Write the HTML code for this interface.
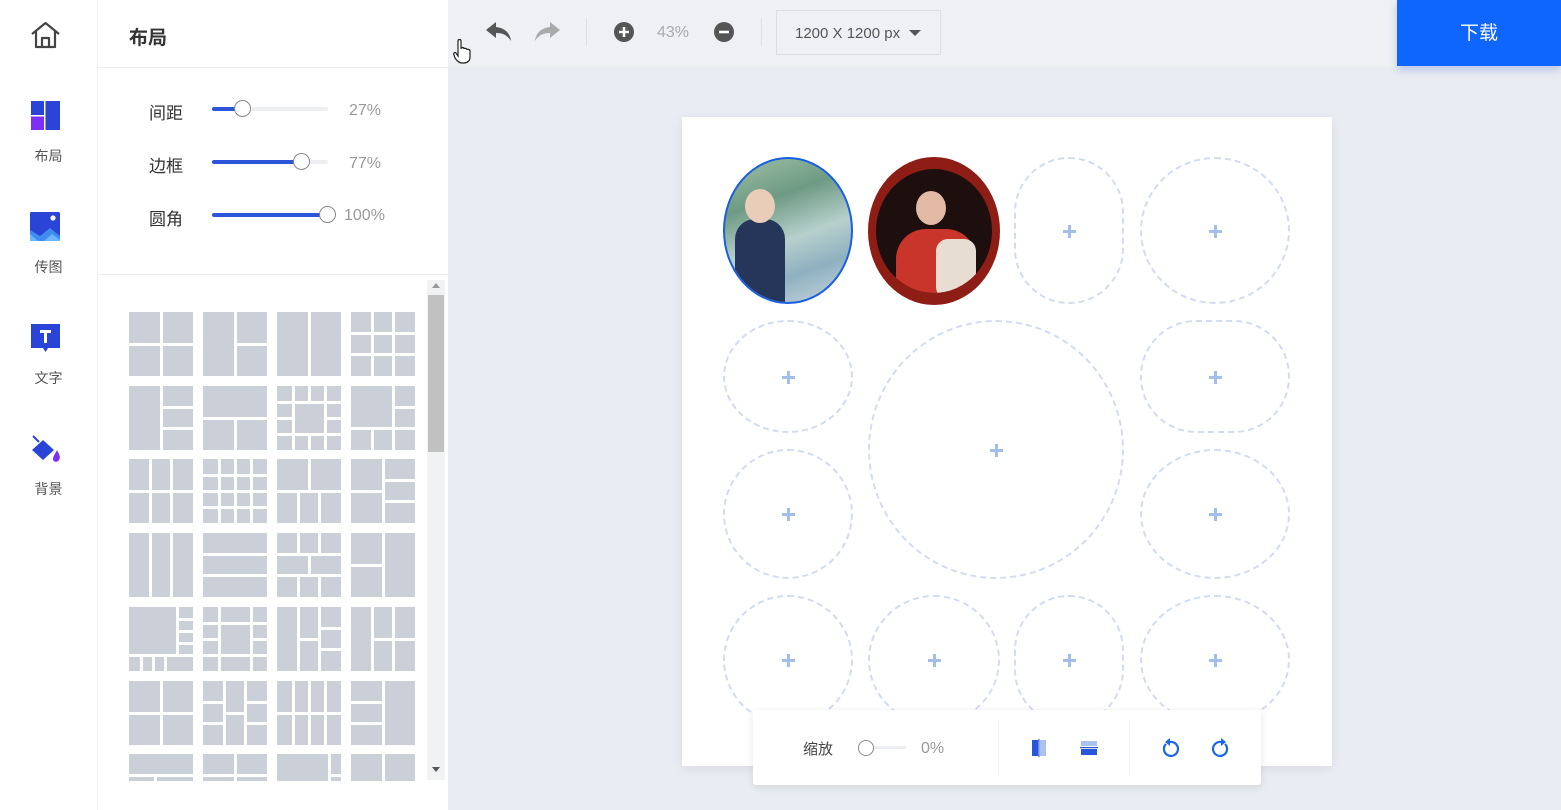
<!DOCTYPE html>
<html><head><meta charset="utf-8">
<style>
*{margin:0;padding:0;box-sizing:border-box}
body{width:1561px;height:810px;overflow:hidden;background:#e9ecf2;font-family:"Liberation Sans","Noto Sans CJK SC",sans-serif;position:relative}
.abs{position:absolute}
#side{left:0;top:0;width:98px;height:810px;background:#fff;border-right:1px solid #eceef2}
.nav{position:absolute;left:0;width:97px;text-align:center;font-size:14px;color:#555}
#panel{left:98px;top:0;width:350px;height:810px;background:#fff}
#phead{left:0;top:0;width:350px;height:68px;border-bottom:1px solid #eceef2}
#phead span{position:absolute;left:31px;top:23px;font-size:19px;font-weight:bold;color:#333}
.lbl{position:absolute;left:51px;font-size:17px;color:#333}
.trk{position:absolute;left:114px;width:116px;height:4px;background:#eceef2;border-radius:2px}
.fill{position:absolute;left:0;top:0;height:4px;background:#2c55d9;border-radius:2px}
.knob{position:absolute;top:-7px;width:17px;height:17px;border:1px solid #888;border-radius:50%;background:#fff}
.val{position:absolute;font-size:16px;color:#999}
#sep{left:0;top:274px;width:350px;height:1px;background:#eceef2}
.th{position:absolute;width:64px;height:64px;background:#cbcfd7;overflow:hidden}
.th i{position:absolute;background:#fff}
#top{left:448px;top:0;width:1113px;height:67px;background:#eef0f4}
#dl{left:1397px;top:0;width:164px;height:66px;background:#0f66ff;color:#fff;font-size:19px;text-align:center;line-height:68px;box-shadow:0 4px 8px rgba(40,80,200,.25)}
#canvas{left:682px;top:117px;width:650px;height:649px;background:#fff;box-shadow:0 2px 10px rgba(0,0,0,.08)}
.s{position:absolute;border:2px dashed #d2dcef}
.s b{position:absolute;left:50%;top:50%;width:13px;height:13px;margin:-6px 0 0 -6px}
.s b:before{content:"";position:absolute;left:5px;top:0;width:3px;height:13px;background:#a3bfe9}
.s b:after{content:"";position:absolute;left:0;top:5px;width:13px;height:3px;background:#a3bfe9}
#bar{left:753px;top:710px;width:508px;height:75px;background:#fff;border-radius:3px;box-shadow:0 2px 8px rgba(0,0,0,.1)}
</style></head><body>
<div id="side" class="abs">
 <svg class="abs" style="left:30px;top:21px" width="31" height="28" viewBox="0 0 31 28"><path d="M2 13 L15.5 2 L29 13 M6 10 V26 H25 V10 M12 26 V17 H19 V26" fill="none" stroke="#444" stroke-width="2.2" stroke-linejoin="round"/></svg>
 <svg class="abs" style="left:31px;top:101px" width="29" height="29" viewBox="0 0 29 29"><rect x="0" y="0" width="13" height="14" fill="#2a44d8"/><rect x="0" y="15.5" width="13" height="13.5" fill="#7b2ff7"/><rect x="14.5" y="0" width="14.5" height="29" fill="#2a44d8"/></svg>
 <div class="nav" style="top:146px">布局</div>
 <svg class="abs" style="left:30px;top:212px" width="30" height="29" viewBox="0 0 30 29"><rect width="30" height="29" rx="1.5" fill="#2a44d8"/><circle cx="23" cy="6" r="2.6" fill="#fff"/><path d="M0 18 L10 24 L20 16 L30 24 V29 H0Z" fill="#3f8cf0"/><path d="M0 22 L8 29 H0Z M14 29 L22 22 L30 28 V29Z" fill="#6cb6ff"/></svg>
 <div class="nav" style="top:257px">传图</div>
 <svg class="abs" style="left:31px;top:324px" width="29" height="29" viewBox="0 0 29 29"><path d="M0 0 H29 V24 H17 L14.5 28 L12 24 H0Z" fill="#2a44d8"/><path d="M9 6 H20 V9 H16 V19 H13 V9 H9Z" fill="#fff"/></svg>
 <div class="nav" style="top:368px">文字</div>
 <svg class="abs" style="left:30px;top:433px" width="32" height="31" viewBox="0 0 32 31"><path d="M3 3 L9 9" stroke="#2a44d8" stroke-width="2"/><path d="M2 17 L13 7 L24 17 L13 27Z" fill="#2a44d8"/><path d="M27 17 C29 21 31 24 29 27 C27 30 23 29 23 26 C23 23 26 20 27 17Z" fill="#7b2ff7"/></svg>
 <div class="nav" style="top:479px">背景</div>
</div>

<div id="panel" class="abs">
 <div id="phead" class="abs"><span>布局</span></div>
 <div class="lbl" style="top:99px">间距</div>
 <div class="trk" style="top:107px"><div class="fill" style="width:31px"></div><div class="knob" style="left:22px"></div></div>
 <div class="val" style="left:251px;top:102px">27%</div>
 <div class="lbl" style="top:152px">边框</div>
 <div class="trk" style="top:160px"><div class="fill" style="width:90px"></div><div class="knob" style="left:81px"></div></div>
 <div class="val" style="left:251px;top:155px">77%</div>
 <div class="lbl" style="top:205px">圆角</div>
 <div class="trk" style="top:213px"><div class="fill" style="width:116px"></div><div class="knob" style="left:107px"></div></div>
 <div class="val" style="left:246px;top:207px">100%</div>
 <div id="sep" class="abs"></div>
 <div id="thumbs" class="abs" style="left:0;top:0;width:330px;height:781px;overflow:hidden"></div>
 <div class="abs" style="left:329px;top:280px;width:18px;height:500px;background:#f1f2f4"></div>
 <div class="abs" style="left:330px;top:295px;width:16px;height:157px;background:#c1c1c1"></div>
 <div class="abs" style="left:334px;top:283px;width:0;height:0;border-left:4px solid transparent;border-right:4px solid transparent;border-bottom:5px solid #999"></div>
 <div class="abs" style="left:334px;top:767px;width:0;height:0;border-left:4px solid transparent;border-right:4px solid transparent;border-top:5px solid #555"></div>
</div>

<div id="top" class="abs">
 <svg class="abs" style="left:38px;top:22px" width="26" height="20" viewBox="0 0 26 20"><path d="M10 0 L0 8 L10 16 V11 C17 11 21 13 25 19 C24 11 19 6 10 5Z" fill="#555"/></svg>
 <svg class="abs" style="left:86px;top:22px" width="26" height="20" viewBox="0 0 26 20"><path d="M16 0 L26 8 L16 16 V11 C9 11 5 13 1 19 C2 11 7 6 16 5Z" fill="#aaa"/></svg>
 <div class="abs" style="left:138px;top:18px;width:1px;height:28px;background:#dcdfe5"></div>
 <svg class="abs" style="left:166px;top:22px" width="20" height="20"><circle cx="10" cy="10" r="10" fill="#555"/><path d="M5 10H15M10 5V15" stroke="#fff" stroke-width="2.6"/></svg>
 <div class="abs" style="left:209px;top:24px;font-size:16px;color:#aaa">43%</div>
 <svg class="abs" style="left:266px;top:22px" width="20" height="20"><circle cx="10" cy="10" r="10" fill="#555"/><path d="M5 10H15" stroke="#fff" stroke-width="2.6"/></svg>
 <div class="abs" style="left:313px;top:18px;width:1px;height:28px;background:#dcdfe5"></div>
 <div class="abs" style="left:328px;top:10px;width:165px;height:45px;border:1px solid #dcdfe5;font-size:15px;color:#555;line-height:45px;padding-left:18px">1200 X 1200 px</div>
 <div class="abs" style="left:461px;top:30px;width:0;height:0;border-left:6px solid transparent;border-right:6px solid transparent;border-top:6px solid #555"></div>
 <svg class="abs" style="left:5px;top:39px" width="18" height="25" viewBox="0 0 18 25"><path d="M5 2 C5 0 8 0 8 2 V10 C8 8 11 8 11 10 C11 9 14 9 14 11 C14 10 17 10 17 12 V18 C17 22 14 24 11 24 H9 C6 24 4 22 2 19 L1 16 C0 14 2 13 3 14 L5 17Z" fill="#fff" stroke="#222" stroke-width="1.2"/></svg>
</div>
<div id="dl" class="abs">下载</div>

<div id="canvas" class="abs">
 <div class="abs" style="left:41px;top:40px;width:130px;height:147px;border-radius:50%;border:2px solid #1a5fe0;overflow:hidden;background:linear-gradient(160deg,#9fc2a8 0%,#6e9a83 30%,#b6d0cc 55%,#8fb0c0 75%,#c6d6dc 100%)">
  <div class="abs" style="left:10px;top:60px;width:50px;height:90px;background:#26355a;border-radius:20px 20px 0 0"></div>
  <div class="abs" style="left:20px;top:30px;width:30px;height:34px;background:#e9cdb8;border-radius:50%"></div>
 </div>
 <div class="abs" style="left:186px;top:40px;width:132px;height:148px;border-radius:50%;background:#8e1d16;overflow:hidden">
  <div class="abs" style="left:8px;top:12px;width:116px;height:124px;border-radius:50%;background:#1c0f0e;overflow:hidden">
   <div class="abs" style="left:20px;top:60px;width:80px;height:70px;background:#c9352a;border-radius:30px 30px 0 0"></div>
   <div class="abs" style="left:60px;top:70px;width:40px;height:60px;background:#e8ddd2;border-radius:12px"></div>
   <div class="abs" style="left:40px;top:22px;width:30px;height:34px;background:#e2b9a4;border-radius:50%"></div>
  </div>
 </div>
 <div class="s" style="left:332px;top:40px;width:110px;height:147px;border-radius:55px"><b></b></div>
 <div class="s" style="left:458px;top:40px;width:150px;height:147px;border-radius:50%"><b></b></div>
 <div class="s" style="left:41px;top:203px;width:130px;height:113px;border-radius:50%"><b></b></div>
 <div class="s" style="left:186px;top:203px;width:256px;height:259px;border-radius:50%"><b></b></div>
 <div class="s" style="left:458px;top:203px;width:150px;height:113px;border-radius:56px"><b></b></div>
 <div class="s" style="left:41px;top:332px;width:130px;height:130px;border-radius:50%"><b></b></div>
 <div class="s" style="left:458px;top:332px;width:150px;height:130px;border-radius:50%"><b></b></div>
 <div class="s" style="left:41px;top:478px;width:130px;height:130px;border-radius:50%"><b></b></div>
 <div class="s" style="left:186px;top:478px;width:132px;height:130px;border-radius:50%"><b></b></div>
 <div class="s" style="left:332px;top:478px;width:110px;height:130px;border-radius:55px"><b></b></div>
 <div class="s" style="left:458px;top:478px;width:150px;height:130px;border-radius:50%"><b></b></div>
</div>

<div id="bar" class="abs">
 <div class="abs" style="left:50px;top:28px;font-size:15px;color:#444">缩放</div>
 <div class="abs" style="left:113px;top:36px;width:40px;height:3px;background:#eceef2"></div>
 <div class="abs" style="left:105px;top:30px;width:16px;height:16px;border:1px solid #888;border-radius:50%;background:#fff"></div>
 <div class="abs" style="left:168px;top:30px;font-size:16px;color:#999">0%</div>
 <div class="abs" style="left:245px;top:10px;width:1px;height:56px;background:#eef0f3"></div>
 <div class="abs" style="left:376px;top:10px;width:1px;height:56px;background:#eef0f3"></div>
 <svg class="abs" style="left:278px;top:29px" width="16" height="18"><rect x="1" y="1" width="6" height="16" fill="#2a55d9"/><rect x="9" y="1" width="6" height="16" fill="#a9c2f2"/><rect x="7.3" y="0" width="1.2" height="18" fill="#2a55d9"/></svg>
 <svg class="abs" style="left:327px;top:31px" width="18" height="15"><rect x="1" y="0" width="16" height="5" fill="#a9c2f2"/><rect x="0" y="6" width="18" height="1.2" fill="#2a55d9"/><rect x="1" y="8" width="16" height="6" fill="#2a55d9"/></svg>
 <svg class="abs" style="left:408px;top:28px" width="18" height="20" viewBox="0 0 18 20"><path d="M5 6 A7 7 0 1 0 9 4" fill="none" stroke="#1a66e8" stroke-width="2.2"/><path d="M9 0 V8 L4 4Z" fill="#1a66e8"/></svg>
 <svg class="abs" style="left:459px;top:28px" width="18" height="20" viewBox="0 0 18 20"><path d="M13 6 A7 7 0 1 1 9 4" fill="none" stroke="#1a66e8" stroke-width="2.2"/><path d="M9 0 V8 L14 4Z" fill="#1a66e8"/></svg>
</div>

<script>
var P=[
 ["v32","h32"],["v32","h32 32 64"],["v32"],["v21","v42","h21","h42"],
 ["v32","h21 32 64","h42 32 64"],["h32","v32 32 64"],["v16","v32 0 16","v48","v32 48 64","h16","h48","h32 0 16","h32 48 64"],["v42","h42","h21 42 64","v21 42 64"],
 ["v21","v42","h32"],["v16","v32","v48","h16","h32","h48"],["v32 0 32","h32","v21 32 64","v42 32 64"],["v32","h21 32 64","h42 32 64","h32 0 32"],
 ["v21","v42"],["h21","h42"],["v21 0 21","v42 0 21","h21","h42","v32 21 42","v21 42 64","v42 42 64"],["v32","h32 0 32"],
 ["v48 0 48","h48","h12 48 64","h24 48 64","h36 48 64","v12 48 64","v24 48 64","v36 48 64"],["v16","v48","h16","h48","h32 0 16","h32 48 64"],["v21","v42 0 64","h32 21 42","h21 42 64","h42 42 64"],["v21","v42","h32 21 64"],
 ["v32","h32"],["v21","v42","h21 0 21","h42 0 21","h32 21 42","h21 42 64","h42 42 64"],["v16","v32","v48","h32"],["v32","h21 0 32","h42 0 32"],
 ["h21","v26 21 64"],["v32","h21"],["v52","h21 52 64","h42 52 64"],["v32"]
];
var xs=[129,203,277,351],h="";
for(var i=0;i<P.length;i++){
 var r=Math.floor(i/4),c=i%4,x=xs[c]-98,y=312+r*73.7;
 var s='<div class="th" style="left:'+x+'px;top:'+y.toFixed(0)+'px">';
 P[i].forEach(function(l){var t=l[0],a=l.substr(1).split(" ").map(Number);var p=a[0],a1=a.length>1?a[1]:0,a2=a.length>1?a[2]:64;
  if(t=="v")s+='<i style="left:'+(p-1.5)+'px;top:'+a1+'px;width:3px;height:'+(a2-a1)+'px"></i>';
  else s+='<i style="top:'+(p-1.5)+'px;left:'+a1+'px;height:3px;width:'+(a2-a1)+'px"></i>';});
 h+=s+'</div>';
}
document.getElementById("thumbs").innerHTML=h;
</script>
</body></html>
